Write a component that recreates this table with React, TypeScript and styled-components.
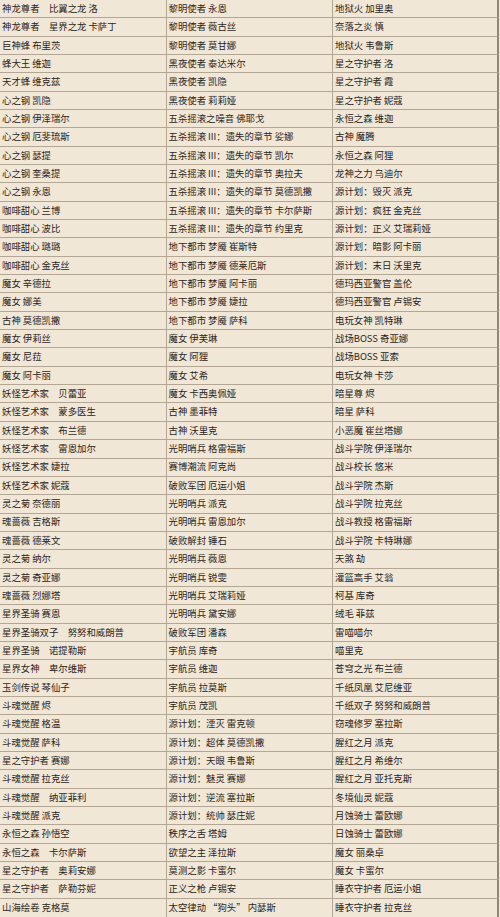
import React from "react";
import styled, { createGlobalStyle } from "styled-components";

const GlobalStyle = createGlobalStyle`
  html, body { margin: 0; padding: 0; background: #f8f1e6; }
  body { font-family: "Noto Sans CJK SC", "Noto Sans", sans-serif; }
`;

const rows: [string, string, string][] = [
  ["神龙尊者　比翼之龙 洛", "黎明使者 永恩", "地狱火 加里奥"],
  ["神龙尊者　星界之龙 卡萨丁", "黎明使者 薇古丝", "奈落之炎 慎"],
  ["巨神蜂 布里茨", "黎明使者 莫甘娜", "地狱火 韦鲁斯"],
  ["蜂大王 维迦", "黑夜使者 泰达米尔", "星之守护者 洛"],
  ["天才蜂 维克兹", "黑夜使者 凯隐", "星之守护者 霞"],
  ["心之钢 凯隐", "黑夜使者 莉莉娅", "星之守护者 妮蔻"],
  ["心之钢 伊泽瑞尔", "五杀摇滚之噪音 佛耶戈", "永恒之森 维迦"],
  ["心之钢 厄斐琉斯", "五杀摇滚 III：遗失的章节 娑娜", "古神 魔腾"],
  ["心之钢 瑟提", "五杀摇滚 III：遗失的章节 凯尔", "永恒之森 阿狸"],
  ["心之钢 奎桑提", "五杀摇滚 III：遗失的章节 奥拉夫", "龙神之力 乌迪尔"],
  ["心之钢 永恩", "五杀摇滚 III：遗失的章节 莫德凯撒", "源计划：毁灭 派克"],
  ["咖啡甜心 兰博", "五杀摇滚 III：遗失的章节 卡尔萨斯", "源计划：疯狂 金克丝"],
  ["咖啡甜心 波比", "五杀摇滚 III：遗失的章节 约里克", "源计划：正义 艾瑞莉娅"],
  ["咖啡甜心 璐璐", "地下都市 梦魇 崔斯特", "源计划：暗影 阿卡丽"],
  ["咖啡甜心 金克丝", "地下都市 梦魇 德莱厄斯", "源计划：末日 沃里克"],
  ["魔女 辛德拉", "地下都市 梦魇 阿卡丽", "德玛西亚警官 盖伦"],
  ["魔女 娜美", "地下都市 梦魇 婕拉", "德玛西亚警官 卢锡安"],
  ["古神 莫德凯撒", "地下都市 梦魇 萨科", "电玩女神 凯特琳"],
  ["魔女 伊莉丝", "魔女 伊芙琳", "战场BOSS 奇亚娜"],
  ["魔女 尼菈", "魔女 阿狸", "战场BOSS 亚索"],
  ["魔女 阿卡丽", "魔女 艾希", "电玩女神 卡莎"],
  ["妖怪艺术家　贝蕾亚", "魔女 卡西奥佩娅", "暗星尊 烬"],
  ["妖怪艺术家　蒙多医生", "古神 墨菲特", "暗星 萨科"],
  ["妖怪艺术家　布兰德", "古神 沃里克", "小恶魔 崔丝塔娜"],
  ["妖怪艺术家　雷恩加尔", "光明哨兵 格雷福斯", "战斗学院 伊泽瑞尔"],
  ["妖怪艺术家 婕拉", "赛博潮流 阿克尚", "战斗校长 悠米"],
  ["妖怪艺术家 妮蔻", "破败军团 厄运小姐", "战斗学院 杰斯"],
  ["灵之菊 奈德丽", "光明哨兵 派克", "战斗学院 拉克丝"],
  ["魂蔷薇 吉格斯", "光明哨兵 雷恩加尔", "战斗教授 格雷福斯"],
  ["魂蔷薇 德莱文", "破败解封 锤石", "战斗学院 卡特琳娜"],
  ["灵之菊 纳尔", "光明哨兵 薇恩", "天煞 劫"],
  ["灵之菊 奇亚娜", "光明哨兵 锐雯", "灌篮高手 艾翁"],
  ["魂蔷薇 烈娜塔", "光明哨兵 艾瑞莉娅", "柯基 库奇"],
  ["星界圣骑 赛恩", "光明哨兵 黛安娜", "绒毛 菲兹"],
  ["星界圣骑双子　努努和威朗普", "破败军团 潘森", "雷喵喵尔"],
  ["星界圣骑　诺提勒斯", "宇航员 库奇", "喵里克"],
  ["星界女神　卑尔维斯", "宇航员 维迦", "苍穹之光 布兰德"],
  ["玉剑传说 琴仙子", "宇航员 拉莫斯", "千纸凤凰 艾尼维亚"],
  ["斗魂觉醒 烬", "宇航员 茂凯", "千纸双子 努努和威朗普"],
  ["斗魂觉醒 格温", "源计划：湮灭 雷克顿", "窃魂修罗 塞拉斯"],
  ["斗魂觉醒 萨科", "源计划：超体 莫德凯撒", "腥红之月 派克"],
  ["星之守护者 赛娜", "源计划：天眼 韦鲁斯", "腥红之月 希维尔"],
  ["斗魂觉醒 拉克丝", "源计划：魅灵 赛娜", "腥红之月 亚托克斯"],
  ["斗魂觉醒　纳亚菲利", "源计划：逆流 塞拉斯", "冬境仙灵 妮蔻"],
  ["斗魂觉醒 派克", "源计划：统帅 瑟庄妮", "月蚀骑士 蕾欧娜"],
  ["永恒之森 孙悟空", "秩序之舌 塔姆", "日蚀骑士 蕾欧娜"],
  ["永恒之森　卡尔萨斯", "欲望之主 泽拉斯", "魔女 丽桑卓"],
  ["星之守护者　奥莉安娜", "莫测之影 卡蜜尔", "魔女 卡蜜尔"],
  ["星之守护者　萨勒芬妮", "正义之枪 卢锡安", "睡衣守护者 厄运小姐"],
  ["山海绘卷 克格莫", "太空律动 “狗头” 内瑟斯", "睡衣守护者 拉克丝"],
];

const Table = styled.div`
  width: 500px;
  height: 917px;
  display: grid;
  grid-template-columns: 166.5px 166.5px 167px;
  grid-template-rows: repeat(50, 1fr);
  background: #f1e7d7;
  overflow: hidden;
`;

const Cell = styled.div<{ $last: boolean; $bottom: boolean }>`
  display: flex;
  align-items: center;
  padding-left: 2px;
  box-sizing: border-box;
  border-bottom: ${(p) => (p.$bottom ? "none" : "1px solid #b3a794")};
  border-right: ${(p) => (p.$last ? "2px solid #8f8578" : "1px solid #b3a794")};
  margin-right: ${(p) => (p.$last ? "1px" : "0")};
  font-size: 9.4px;
  line-height: 1;
  color: #2a2521;
  white-space: pre;
  overflow: hidden;
`;

export default function App() {
  return (
    <>
      <GlobalStyle />
      <Table>
        {rows.map((r, i) =>
          r.map((t, j) => (
            <Cell key={`${i}-${j}`} $last={j === 2} $bottom={i === rows.length - 1}>
              {t}
            </Cell>
          ))
        )}
      </Table>
    </>
  );
}
